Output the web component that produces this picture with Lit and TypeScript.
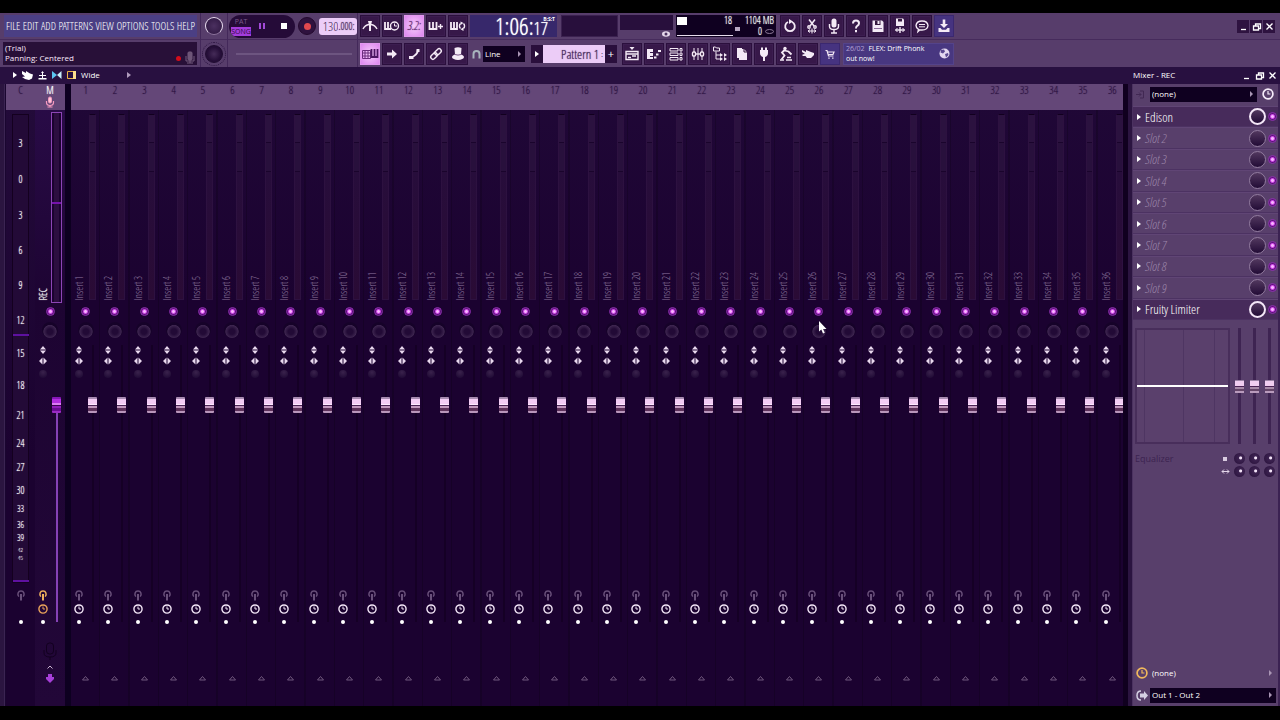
import { LitElement, html, svg, css, nothing } from "lit";
import { customElement, property } from "lit/decorators.js";
import { classMap } from "lit/directives/class-map.js";

const base = css`
  *, *::before, *::after, :host { box-sizing: border-box; }
  button, input, select {
    appearance: none; margin: 0; padding: 0; border: 0; background: none;
    color: inherit; font: inherit; outline: none; border-radius: 0; min-width: 0;
  }
  button { display: grid; place-items: center; }
  svg { display: block; overflow: visible; }
  .knob { border-radius: 50%; }
  .knob::-webkit-slider-thumb { appearance: none; opacity: 0; width: 1px; height: 1px; }
  .led {
    width: 9px; height: 9px; border-radius: 50%; border: 1px solid #8d2fae;
    background: radial-gradient(circle, #f7b2ff 0 1px, #cd45e6 2px, #5b1478 3px);
  }
`;

const clock = (color: string, size: number) => html`
  <svg width=${size} height=${size} viewBox="0 0 12 12" fill="none" stroke=${color}>
    <circle cx="6" cy="6" r="4.900" stroke-width="1.700"></circle><path d="M6 3v3h2.400" stroke-width="1.200"></path>
  </svg>`;

const link = (color: string) => html`
  <svg width="8" height="11" viewBox="0 0 8 11" fill="none" stroke=${color}>
    <path d="M1.800 6.600C0 4.400 1 1 4 1s4 3.400 2.200 5.600" stroke-width="1.500"></path>
    <path d="M4 4v6.500" stroke-width="2"></path>
  </svg>`;

@customElement("mixer-strip")
export class MixerStrip extends LitElement {
  @property() label = "";
  @property() name = "";
  @property({ type: Boolean, reflect: true }) master = false;

  static styles = [base, css`
    :host {
      display: flex; flex-direction: column; min-width: 0;
      font-family: "Open Sans Condensed Light", "Open Sans Condensed", "Roboto Condensed", sans-serif;
      background: linear-gradient(90deg, transparent 28px, #0000002e 28px), linear-gradient(#200837, #1b0230 35%, #1b0230);
    }
    :host([master]) { background: linear-gradient(#2a0c49, #1d0432 35%, #220738); }
    .head {
      height: 26px; background: #644778; color: #2c1240; font-size: 11px; line-height: 12px;
      display: flex; flex-direction: column; align-items: center; flex: none; text-shadow: 0 0 1px #3a1f50;
    }
    :host([master]) .head { color: #fff; text-shadow: 0 0 1px #fff; }
    .two { display: grid; grid-template-columns: 16px 11px; justify-items: center; }
    .top { height: 194px; padding-top: 4px; flex: none; }
    .name {
      writing-mode: vertical-rl; transform: rotate(180deg); align-self: end; color: #927aa0;
      font-size: 10px; line-height: 12px; padding-top: 4px; white-space: nowrap;
    }
    :host([master]) .name { color: #fff; text-shadow: 0 0 1px #fff; }
    .meter {
      width: 7px; height: 186px; border: 1px solid #2d1140; border-top-color: #12001f;
      background: linear-gradient(#2b123f 0 27px, #1a042c 27px 28px, #28103c 28px 56px, #1a042c 56px 57px, #270d3b 57px, #2a0b35);
    }
    :host([master]) .top { padding-top: 2px; }
    :host([master]) .meter {
      width: 11px; height: 191px; border: 1px solid #8c45b5;
      background: linear-gradient(transparent 89px, #7512ac 89px 91px, transparent 91px), linear-gradient(90deg, #1b0230 2px, #2c0e40 2px 7px, #1b0230 7px);
    }
    .mute { height: 14px; display: grid; place-items: center; flex: none; }
    .pan { height: 24px; display: grid; place-items: center; flex: none; }
    .pan .knob {
      width: 16px; height: 16px; background: radial-gradient(ellipse 7px 7px at 50% 60%, #220a36 40%, #3d254f 90%, #160229);
    }
    .mid { flex: 1; min-height: 0; grid-template-rows: minmax(0, 1fr); }
    .left { display: flex; flex-direction: column; align-items: center; padding-top: 2px; }
    .left > * { display: grid; place-items: center; flex: none; }
    .a { height: 12px; } .b { height: 10px; } .c { height: 16px; } .d { height: 14px; } .e { height: 12px; }
    .c .knob { width: 8px; height: 8px; background: radial-gradient(circle at 50% 30%, #3a224c, #1a0530); }
    .left .space { flex: 1; }
    .dot { width: 4px; height: 4px; border-radius: 50%; background: #fff; }
    .fader {
      writing-mode: vertical-lr; direction: rtl; width: 9px; height: auto; align-self: stretch;
      margin: 3px 0 6px; background: linear-gradient(90deg, transparent 4px, #150025 4px 6px, transparent 6px);
    }
    :host([master]) .fader { background: linear-gradient(90deg, transparent 4px, #8542b5 4px 6px, transparent 6px) bottom / 100% 210px no-repeat; }
    .fader::-webkit-slider-thumb {
      appearance: none; width: 9px; height: 16px; border-radius: 1px;
      background: linear-gradient(#a78ab0 0 2px, #f3ccf4 2px 7px, #ffe9ff 7px 8px, #4a2254 8px 9px, #c096bd 9px 11px, #5c3059 11px 14px, #b996bb 14px);
    }
    :host([master]) .fader::-webkit-slider-thumb {
      background: linear-gradient(#8417b5 0 2px, #b22de0 2px 6px, #dc7cf5 6px 8px, #3a0650 8px 9px, #8d1bb8 9px 11px, #6a0b93 11px 14px, #9a2bc4 14px);
    }
    .foot { height: 78px; flex: none; display: flex; flex-direction: column; align-items: center; padding-top: 45px; }
    :host([master]) .foot { padding-top: 14px; gap: 5px; }
  `];

  render() {
    return html`
      <div class="head"><span>${this.label}</span>
        ${this.master ? html`<svg width="10" height="12" viewBox="0 0 10 12" fill="none" stroke="#f79ac0"><rect x="3.500" y="1" width="3" height="6" rx="1.500" fill="#ffc6d8"></rect><path d="M1.500 5v1.500a3.500 3 0 0 0 7 0V5M5 9v2M2.500 11h5" stroke-width="1.200"></path></svg>` : nothing}
      </div>
      <div class="two top"><span class="name">${this.name}</span><span class="meter"></span></div>
      <div class="mute"><input class="led" type="checkbox" checked aria-label="${this.name} on"></div>
      <div class="pan"><input class="knob" type="range" aria-label="${this.name} panning"></div>
      <div class="two mid">
        <div class="left">
          <button class="a" aria-label="Invert phase"><svg width="6" height="8" viewBox="0 0 6 8" fill="#e9d8ee"><path d="M3 0L6 3.500H0zM3 8L6 4.500H0z"></path></svg></button>
          <button class="b" aria-label="Swap channels"><svg width="8" height="6" viewBox="0 0 8 6" fill="#e9d8ee"><path d="M0 3L3.500-.5v7zM8 3L4.500-.5v7z"></path></svg></button>
          <span class="c"><input class="knob" type="range" aria-label="${this.name} stereo"></span>
          <span class="space"></span>
          <button class="d" aria-label="Route">${link(this.master ? "#f0b25c" : "#69507a")}</button>
          <button class="d" aria-label="Latency">${clock(this.master ? "#e9a35a" : "#f3e6f7", 10)}</button>
          <span class="e"><span class="dot"></span></span>
        </div>
        <input class="fader" type="range" value="80" aria-label="${this.name} level">
      </div>
      <div class="foot">
        ${this.master
          ? html`<svg width="14" height="18" viewBox="0 0 14 18" fill="none" stroke="#12001f"><rect x="3.500" y="1" width="7" height="11" rx="3"></rect><path d="M1 8v3q0 4 6 4t6-4V8M7 15v3"></path></svg>
            <svg width="6" height="4" viewBox="0 0 6 4" fill="none" stroke="#c8b5d0"><path d="M.5 3.500L3 1l2.500 2.500"></path></svg>
            <svg width="8" height="9" viewBox="0 0 8 9" fill="#a63fd8"><path d="M2 0h4v3h2v2L4 9 0 5V3h2z"></path></svg>`
          : html`<svg width="7" height="10" viewBox="0 0 7 10" fill="none" stroke="#71597e"><path d="M.5 7L3.500 3.500 6.500 7z"></path></svg>`}
      </div>`;
  }
}

const K = "#f4eaf6";
const icons: Record<string, unknown> = {
  metro: svg`<path d="M3 13Q5 9 9 8.500M17 13Q15 9 11 8.500"/><path d="M8 5h4l-1 4v6H9V9z" fill=${K} stroke="none"/>`,
  wait: svg`<path d="M3 6v7h6M6 6v7" stroke-width="1.800"/><circle cx="12.500" cy="10" r="4"/><path d="M12.500 7.500V10H15" stroke-width="1"/>`,
  count: svg``,
  keysPlus: svg`<path d="M3.500 6v7h7V6M7 6v7" stroke-width="1.800"/><path d="M12 10.500h5M14.500 8v5"/>`,
  keysLoop: svg`<path d="M3 6v7h6V6M6 6v7" stroke-width="1.800"/><path d="M12.500 12.500a3.500 3.500 0 0 1 0-5M15.500 7.500a3.500 3.500 0 0 1 0 5"/><path d="M12.500 5.500l3 1.500-3 2zM15.500 15l-3-1.800 3-2z" fill=${K} stroke="none"/>`,
  typing: svg`<path d="M2.500 6.500h8v8h-8z" stroke="#6b2c7c" stroke-width="1"/><path d="M2 9h9M2 12h9M5 6v9M8 6v9" stroke="#6b2c7c" stroke-width="1"/><path d="M11.500 5v8h6V5M14.500 5v8" stroke="#4b1560" stroke-width="1.800"/>`,
  arrow: svg`<path d="M5 8.500h5V5.500l5 4.500-5 4.500v-3H5z" fill=${K} stroke="none"/>`,
  slide: svg`<path d="M13.800 6q0 5-7 7.500" stroke-width="1.800"/><path d="M5 12h4.500v3H5zM12.500 5h3v3h-3z" fill=${K} stroke="none"/>`,
  chain: svg`<rect x="-2.200" y="-3.700" width="4.400" height="7.400" rx="2.200" transform="translate(12 8) rotate(45)"/><rect x="-2.200" y="-3.700" width="4.400" height="7.400" rx="2.200" transform="translate(8 12) rotate(45)"/>`,
  hat: svg`<path d="M6.500 4q3.500-1.500 7 0L13 11q-3 1.200-6 0z" fill=${K} stroke="none"/><ellipse cx="10" cy="13" rx="6" ry="3" fill=${K} stroke="none"/><path d="M7 10.500q3 1.200 6 0" stroke="#7b5589" stroke-width="1"/>`,
  playlist: svg`<path d="M4 7.500h12v8H4zM4 10h12"/><path d="M7.500 3h5L10 6z" fill=${K} stroke="none"/><path d="M6 13.500h3M10 12h4"/>`,
  piano: svg`<path d="M3 5h6v3H6v1h3v3H6v1h3v2H3z" fill=${K} stroke="none"/><path d="M10 13.500h2.500M12 10.500h2.500M14 7h3" stroke-width="2"/>`,
  rack: svg`<path d="M4 4.500h8v2.500H4zM4 9h8v2.500H4zM4 13.500h8V16H4z" stroke-width="1"/><path d="M14 4.500h2v2.500h-2zM14 9h2v2.500h-2zM14 13.500h2V16h-2z" stroke-width="1"/>`,
  mixer: svg`<path d="M6 4v12M10 4v12M14 4v12" stroke-width="1"/><rect x="4.500" y="8" width="3" height="4" rx="1" fill="#35183f"/><rect x="12.500" y="8" width="3" height="4" rx="1" fill="#35183f"/><path d="M8 10h4"/>`,
  tree: svg`<path d="M3.500 3h2l1 1h3v3h-6zM6 7.500V15h4M6 11h4" stroke-width="1"/><path d="M10 9l3 2-3 2zM14 9l3 2-3 2zM10 13l3 2-3 2zM14 13l3 2-3 2z" fill=${K} stroke="none"/>`,
  copy: svg`<path d="M5 4h5v1h2l3 3v8H7v-2H5z" fill=${K} stroke="none"/><path d="M12 5v3h3" stroke="#35183f" stroke-width="1"/>`,
  plug: svg`<path d="M7 3.500h2V6h2V3.500h2V6h1v3q0 3-3 4v4H9v-4q-3-1-3-4V6h1z" fill=${K} stroke="none"/>`,
  tempo: svg`<circle cx="9" cy="4.500" r="1.700" fill=${K} stroke="none"/><path d="M8.500 6L6 8.500l2.500 3-3 4M8.500 6.500l4 1 3 3" stroke-width="1.800"/><path d="M4 16h4M10 16h6M11 13.500h4" stroke-width="1.500"/>`,
  hand: svg`<path d="M4 6l4 2V6l5 2 3 1v2l-3 3H9l-1.500-2H4.500v-1.500L7 10 4 8z" fill=${K} stroke="none"/>`,
  cart: svg`<path d="M5.500 6.500h1.500l1.500 5.500h5M7.500 8h6.500l-1 2.500H8.500" stroke-width="1.200"/><path d="M9 13.500v1.300M12.800 13.500v1.300"/>`,
  undo: svg`<path d="M8 6a4.800 4.800 0 1 0 4 0" stroke-width="1.800"/><path d="M9 3l4 2.500-4 2.500z" fill=${K} stroke="none"/>`,
  cut: svg`<path d="M7 3.500l5 6.500M13 3.500l-5 6.500" stroke-width="1.500"/><circle cx="7" cy="11" r="1.200"/><circle cx="13" cy="11" r="1.200"/><path d="M6 15h8M8 13.500L6 15l2 1.500M12 13.500l2 1.500-2 1.500M10 12.500v5" stroke-width="1"/>`,
  mic: svg`<rect x="7.500" y="2.500" width="5" height="9" rx="2.500" fill=${K} stroke="none"/><path d="M5.500 8v2.500q0 3 4.500 3t4.500-3V8M10 13.500V17M7 17h6"/>`,
  help: svg`<path d="M7 7.500q0-3 3-3t3 2.700q0 1.600-1.700 2.600Q10 10.700 10 12.500" stroke-width="2"/><path d="M9 14h2v2.200H9z" fill=${K} stroke="none"/>`,
  save: svg`<path d="M4.500 4.500H14L15.500 6v10h-11z" fill=${K} stroke="none"/><path d="M7 4.500h5.500V9H7zM11 5v3" fill="#35183f" stroke="none"/><path d="M9.500 5h2v3h-2z" fill=${K} stroke="none"/><path d="M6 12.500h8" stroke="#8b6a9a" stroke-width="1"/>`,
  saveNew: svg`<path d="M6 2.500h7l1 1V10H6z" fill=${K} stroke="none"/><path d="M8 3h4v2.500H8z" fill="#35183f" stroke="none"/><path d="M5.500 14h9M10 11v6"/><path d="M7.500 12l-2 2 2 2M12.500 12l2 2-2 2" stroke-width="1"/>`,
  chat: svg`<path d="M6 15.500l.5-2.200Q4 12 4 9.500 4.500 5 10 5t6 4.500Q15.500 14 10 14q-1.500 0-2-.2z"/><path d="M7 8.500h6M7 10.800h6" stroke-width="1"/>`,
  down: svg`<path d="M8.700 3.500h2.600V8H14l-4 4-4-4h2.700z" fill=${K} stroke="none"/><path d="M4.500 12v4h11v-4h-2L12 13.800H8L6.500 12z" fill=${K} stroke="none"/>`,
};

const row1a = [["metro", "Metronome"], ["wait", "Wait for input"], ["count", "Countdown"], ["keysPlus", "Blend notes"], ["keysLoop", "Loop recording"]];
const row2a = [["typing", "Typing keyboard"], ["arrow", "Step edit"], ["slide", "Slide"], ["chain", "Link"], ["hat", "Multilink"]];
const row1b = [["undo", "Undo"], ["cut", "Cut"], ["mic", "Record"], ["help", "Help"], ["save", "Save"], ["saveNew", "Save new"], ["chat", "Project info"], ["down", "Download"]];
const row2b = [["playlist", "Playlist"], ["piano", "Piano roll"], ["rack", "Channel rack"], ["mixer", "Mixer"], ["tree", "Browser"], ["copy", "Project picker"], ["plug", "Plugins"], ["tempo", "Tempo tapper"], ["hand", "Touch"], ["cart", "Shop"]];
const menus = ["FILE", "EDIT", "ADD", "PATTERNS", "VIEW", "OPTIONS", "TOOLS", "HELP"];

const marks: [string, number][] = [["3", 144], ["0", 180], ["3", 216], ["6", 251], ["9", 286], ["12", 321], ["15", 354], ["18", 386], ["21", 416], ["24", 444], ["27", 468], ["30", 491], ["33", 510], ["36", 526], ["39", 539], ["42", 551], ["45", 559]];
const slots = ["Edison", "Slot 2", "Slot 3", "Slot 4", "Slot 5", "Slot 6", "Slot 7", "Slot 8", "Slot 9", "Fruity Limiter"];

@customElement("app-root")
export class AppRoot extends LitElement {
  static styles = [base, css`
    :host {
      display: flex; flex-direction: column; min-height: 100vh; padding: 13px 0 14px; background: #000;
      color: #fff; font: 8px/10px "Open Sans", "Noto Sans", sans-serif; position: relative; overflow: hidden;
      --narrow: "Open Sans Condensed Light", "Open Sans Condensed", "Roboto Condensed", sans-serif;
    }
    .bar { display: flex; background: #573d6b; height: 54px; flex: none; }
    .group { display: grid; grid-template: 27px 27px / minmax(0, 1fr); border-right: 1px solid #43285a; flex: none; }
    .group > *, .wide > * { display: flex; align-items: center; }
    .group > :first-child, .wide > :first-child { border-bottom: 1px solid #462b5c; }
    .g1 { width: 201px; } .g2 { width: 27px; } .g3 { width: 130px; }
    .wide { flex: 1; min-width: 0; display: grid; grid-template: 27px 27px / minmax(0, 1fr); }
    .menu { padding: 2px 3px 2px 4px; }
    .menu nav {
      flex: 1; height: 22px; background: #4b3f84; display: flex; justify-content: space-between; align-items: center;
      padding: 0 2px; font: 11px/14px var(--narrow); color: #fff; text-shadow: 0 0 1px #fff;
    }
    .hint { padding: 0 3px; }
    .hint > div { flex: 1; height: 23px; background: #281038; padding: 1px 2px; display: flex; align-items: end; gap: 4px; }
    .hint p { margin: 0; flex: 1; color: #f8e8fb; align-self: start; }
    .hint i { width: 5px; height: 5px; background: #d30d1b; border-radius: 50%; margin-bottom: 3px; }
    .center { justify-content: center; }
    .vol { width: 18px; height: 18px; border: 1px solid #e9dcf0; border-bottom-color: #8c739c; background: radial-gradient(#4b3060, #2b143d); }
    .pitch { width: 18px; height: 18px; background: radial-gradient(#452b58, #250e38 60%); border: 1px solid #1f0b30; outline: 1px dotted #2f1744; outline-offset: 2px; }
    .transport { gap: 3px; padding-left: 1px; }
    .pill { display: flex; width: 66px; height: 23px; border-radius: 12px; background: #250b38; overflow: hidden; flex: none; }
    .mode { width: 22px; font-size: 7px; line-height: 9px; display: flex; flex-direction: column; justify-content: center; gap: 1px; padding-left: 2px; }
    .mode button { height: 9px; color: #7a5a8b; }
    .mode .on { background: #a43cdc; color: #2e0b46; }
    .pill > button { width: 22px; }
    .rec { width: 18px; height: 18px; border-radius: 50%; background: #2f123f; border: 1px solid #24092f; flex: none; }
    .rec i { width: 7px; height: 7px; border-radius: 50%; background: #e2484e; }
    .tempo { display: flex; width: 38px; height: 17px; background: #eccdf8; border-radius: 3px; color: #3c1f50; font: 13px/17px var(--narrow); align-items: center; justify-content: center; text-shadow: 0 0 1px #573a68; }
    .tempo input { width: 17px; text-align: right; } .tempo small { font-size: 10px; }
    .line-range { width: 116px; height: 8px; margin-left: 8px; background: linear-gradient(transparent 3px, #6d5580 3px 5px, transparent 5px); }
    .line-range::-webkit-slider-thumb { appearance: none; opacity: 0; width: 1px; }
    .set { display: flex; gap: 2px; flex: none; }
    .tool { width: 20px; height: 22px; background: #371849; border: 1px solid #2b0f3d; box-shadow: 0 0 0 1px #3c1d50 inset; }
    .tool.hot { background: radial-gradient(#f6cdfb, #dd86ef); border-color: #e298ef; box-shadow: none; color: #5b2868; font: italic 12px/12px var(--narrow); text-shadow: 0 0 1px #7b3b88; }
    .tool.blue { background: #463380; border-color: #3b2870; box-shadow: none; }
    .wide > * { padding-left: 2px; }
    .time { width: 87px; height: 22px; background: #37286b; margin-left: 2px; display: flex; align-items: center; justify-content: flex-end; padding-right: 9px; font: 24px/22px var(--narrow); text-shadow: 0 0 1px #fff; flex: none; position: relative; }
    .time small { font-size: 18px; align-self: end; line-height: 18px; }
    .time em { position: absolute; right: 2px; top: 1px; font: normal bold 5px/6px "Open Sans", sans-serif; text-shadow: none; }
    .scope { width: 57px; height: 22px; background: #280f3c; border: 1px solid #3b2150; margin-left: 4px; flex: none; }
    .peak { width: 53px; height: 26px; margin-left: 2px; display: flex; flex-direction: column; align-items: flex-end; flex: none; padding: 2px 2px 0 0; }
    .peak i { align-self: stretch; height: 15px; background: #280f3c; margin-right: -2px; }
    .cpu { width: 100px; height: 22px; background: #0f0020; margin: 0 4px 0 3px; display: grid; grid-template-columns: 34px 1fr 1fr; font: 10px/11px var(--narrow); text-shadow: 0 0 1px #fff; text-align: right; padding-right: 2px; flex: none;
      background-image: linear-gradient(#fff, #fff), linear-gradient(#e7dced, #e7dced), linear-gradient(#b8a9c4, #b8a9c4); background-size: 10px 8px, 56px 1px, 5px 4px; background-position: 1px 2px, 1px 20px, 59px 12px; background-repeat: no-repeat; }
    .cpu span:nth-child(1) { grid-column: 2; padding-right: 10px; }
    .cpu span:nth-child(2) { grid-column: 3; white-space: nowrap; }
    .cpu span:nth-child(3) { grid-column: 3; display: flex; justify-content: flex-end; align-items: center; gap: 3px; }
    .win { display: flex; gap: 1px; margin-left: auto; padding-right: 5px; }
    .win button { width: 12px; height: 13px; background: #2e1340; }
    .magnet { margin: 0 2px 0 4px; flex: none; }
    select { background: #0f0020 url("data:image/svg+xml,%3Csvg xmlns='http://www.w3.org/2000/svg' width='4' height='6'%3E%3Cpath d='M0 0l3 3-3 3z' fill='%23a995b4'/%3E%3C/svg%3E") right 3px center no-repeat; color: #fff; height: 15px; }
    .snap { width: 42px; height: 16px; padding-left: 2px; flex: none; }
    .pattern { display: flex; margin: 0 5px 0 6px; height: 18px; flex: none; }
    .pattern button { width: 12px; background: #2a0f3c; font-size: 11px; }
    .pattern label { width: 62px; background: #ecccf7; color: #3c1f50; display: flex; align-items: center; justify-content: flex-end; padding-right: 2px; }
    .pattern input { width: 54px; text-align: right; font: 13px/16px var(--narrow); text-shadow: 0 0 1px #5b3d6e; padding-right: 2px; }
    .news { width: 111px; height: 22px; margin-left: 3px; background: #483780; border: 1px solid #54438a; display: flex; align-items: center; justify-content: space-between; padding: 0 3px 0 2px; font-size: 7px; flex: none; text-decoration: none; color: #fff; white-space: nowrap; }
    .news span span { color: #b4a1d4; margin-right: 2px; }
    .title { height: 17px; background: #281040; display: flex; align-items: center; flex: none; padding-bottom: 1px; }
    .title .l { display: flex; gap: 5px; align-items: center; padding-left: 13px; flex: 1; }
    .title .l button:last-child { margin-left: 22px; }
    .title .r { width: 147px; display: flex; align-items: center; gap: 3px; padding-right: 3px; }
    .title .r span { flex: 1; } .title .r button { width: 10px; height: 12px; }
    .body { flex: 1; display: flex; min-height: 0; }
    .edge { width: 6px; background: linear-gradient(90deg, #2b1540 4px, #3b2452 4px 5px, #1a0630 5px); flex: none; }
    .cur { width: 29px; flex: none; display: flex; flex-direction: column; align-items: center; background: linear-gradient(#230b3a, #1b0230 60%); font: 10px/8px var(--narrow); }
    .cur .head { align-self: stretch; height: 26px; background: #644778; color: #2c1240; font-size: 11px; line-height: 12px; text-align: center; text-shadow: 0 0 1px #3a1f50; }
    .scale { width: 17px; flex: 1; margin: 4px 0 0; background: #230a37; border: 1px solid #14001f; position: relative; }
    .scale div { display: flex; align-items: flex-end; justify-content: center; color: #fff; text-shadow: 0 0 1px #e6d3ec; }
    .scale div:nth-of-type(n + 13) { font-size: 9px; } .scale div:nth-of-type(n + 16) { font-size: 6px; }
    .mark { position: absolute; left: 0; right: -1px; height: 2px; background: #5e11a0; }
    .mark.hi { top: 219px; } .mark.lo { bottom: 0; }
    .after { height: 123px; display: flex; flex-direction: column; align-items: center; padding-top: 7px; }
    .dot { width: 4px; height: 4px; border-radius: 50%; background: #fff; margin-top: 19px; }
    mixer-strip[master] { width: 30px; flex: none; }
    .gap { width: 6px; background: #0d0020; flex: none; }
    .tracks { flex: 1; min-width: 0; overflow: hidden; display: flex; }
    .lanes { flex: 1; min-width: 0; margin-right: -4px; display: grid; grid-template-columns: repeat(36, minmax(0, 1fr)); }
    .rail { width: 10px; background: linear-gradient(90deg, #10001f 5px, #2b1440 5px 9px, #4b3260 9px); flex: none; }
    .side { width: 147px; background: #583f6b; border-right: 2px solid #3b2252; display: flex; flex-direction: column; flex: none; min-width: 0; }
    .route { display: flex; align-items: center; height: 20px; gap: 5px; padding: 0 4px 0 3px; flex: none; }
    .route select { flex: 1; padding-left: 2px; }
    .route svg { flex: none; }
    .out { height: 22px; gap: 2px; padding-right: 2px; }
    .slots { height: 214px; display: grid; grid-template-rows: repeat(10, 1fr); margin-top: 2px; flex: none; }
    .slot { display: flex; align-items: center; padding: 0 1px 0 4px; border-bottom: 1px solid #4c3262; border-top: 1px solid #604575; font: italic 13px/14px var(--narrow); color: #9d86aa; }
    .slot .lbl { flex: 1; padding-left: 4px; justify-content: start; }
    .slot.full { background: #472b5b; color: #fff; font-style: normal; text-shadow: 0 0 1px #fff; }
    .slot .knob { width: 17px; height: 17px; border: 1px solid #917b9e; background: linear-gradient(#52385f, #27103a 90%); margin-right: 2px; }
    .slot.full .knob { border: 2px solid #f3e6f7; }
    .eq { display: flex; padding: 8px 3px 0 2px; height: 133px; gap: 3px; flex: none; }
    .graph { flex: 1; height: 116px; border: 2px solid #482e5b; background: linear-gradient(transparent 55px, #fff 55px 57px, transparent 57px), linear-gradient(90deg, transparent 7px, #4e3562 7px 8px, transparent 8px 46px, #4e3562 46px 47px, transparent 47px 77px, #4e3562 77px 78px, transparent 78px), #5a406c; }
    .bands { display: flex; gap: 3px; }
    .bands input { writing-mode: vertical-lr; width: 12px; height: 116px; background: linear-gradient(90deg, transparent 5px, #3e2452 5px 8px, transparent 8px); }
    .bands input::-webkit-slider-thumb { appearance: none; width: 9px; height: 13px; background: linear-gradient(#9c83a6 0 1px, #f0cdf0 1px 6px, #4a2254 6px 7px, #a688a7 7px 9px, #644468 9px 11px, #b99bbd 11px); }
    .tune { display: grid; grid-template-columns: 1fr 10px 12px 12px 12px; gap: 2px 3px; align-items: center; justify-items: center; padding: 0 3px 0 2px; color: #3c2350; flex: none; }
    .tune label { justify-self: start; font-size: 9px; }
    .tune .knob { width: 11px; height: 11px; background: radial-gradient(circle at 60% 45%, #f3e4f8 0 1px, #3c2250 2px, #27103a); }
    .push { flex: 1; }
    .out select.clear { background-color: transparent; }
    .cursor { position: absolute; left: 819px; top: 321px; pointer-events: none; }
  `];

  private tools(list: string[][]) {
    return list.map(([id, label]) => html`
      <button class=${classMap({ tool: true, hot: id === "count" || id === "typing", blue: id === "cart" || id === "down" })} aria-label=${label}>
        ${id === "count" ? "3.2:" : html`<svg width="18" height="20" viewBox="1 0 18 20" fill="none" stroke=${K} stroke-width="1.400">${icons[id]}</svg>`}
      </button>`);
  }

  private windowButtons() {
    return ["M3 8.500h5", "M2.500 5h5v4h-5zM4.500 5V3h5v4.500h-2", "M2.500 2.500l6 6M8.500 2.500l-6 6"].map((d, i) => html`
      <button aria-label=${["Minimize", "Restore", "Close"][i]}><svg width="11" height="11" viewBox="0 0 11 11" fill="none" stroke="#fff" stroke-width="1.300"><path d=${d}></path></svg></button>`);
  }

  private tri(c = "#fff") {
    return html`<svg width="4" height="6" viewBox="0 0 4 6" fill=${c}><path d="M0 0l4 3-4 3z"></path></svg>`;
  }

  render() {
    let prev = 112;
    return html`
      <header class="bar">
        <div class="group g1">
          <div class="menu"><nav>${menus.map((m) => html`<button>${m}</button>`)}</nav></div>
          <div class="hint"><div>
            <p>(Trial)<br>Panning: Centered</p><i></i>
            <svg width="10" height="13" viewBox="0 0 10 13" fill="none" stroke="#725b7c"><rect x="3" y="1" width="4" height="8" rx="1" fill="#6a5374"></rect><path d="M1 5v5h8V5M2 12h6M5 3v9"></path></svg>
          </div></div>
        </div>
        <div class="group g2">
          <div class="center"><input class="knob vol" type="range" aria-label="Main volume"></div>
          <div class="center"><input class="knob pitch" type="range" aria-label="Main pitch"></div>
        </div>
        <div class="group g3">
          <div class="transport">
            <div class="pill">
              <div class="mode"><button>PAT</button><button class="on">SONG</button></div>
              <button aria-label="Pause"><svg width="6" height="6" fill="#a24ad8"><path d="M0 0h2v6H0zM4 0h2v6H4z"></path></svg></button>
              <button aria-label="Stop"><svg width="6" height="6" fill="#fff"><path d="M0 0h6v6H0z"></path></svg></button>
            </div>
            <button class="rec" aria-label="Record"><i></i></button>
            <label class="tempo"><input value="130" aria-label="Tempo"><small>.000:</small></label>
          </div>
          <div><input class="line-range" type="range" aria-label="Song position"></div>
        </div>
        <div class="wide">
          <div>
            <div class="set">${this.tools(row1a)}</div>
            <div class="time">1:06:<small>17</small><em>B:S:T</em></div>
            <div class="scope"></div>
            <div class="peak"><i></i><svg width="10" height="7" viewBox="0 0 10 7"><ellipse cx="5" cy="4" rx="4" ry="2.800" fill="#e6d8ec"></ellipse><circle cx="5" cy="4" r="1.500" fill="#4b3160"></circle></svg></div>
            <div class="cpu"><span>18</span><span>1104 MB</span><span>0 <svg width="9" height="5" viewBox="0 0 9 5" fill="none" stroke="#8d7a98"><ellipse cx="4.500" cy="2.500" rx="4" ry="2"></ellipse></svg></span></div>
            <div class="set">${this.tools(row1b)}</div>
            <div class="win">${this.windowButtons()}</div>
          </div>
          <div>
            <div class="set">${this.tools(row2a)}</div>
            <svg class="magnet" width="9" height="10" viewBox="0 0 9 10" fill="none" stroke="#a8b4bd" stroke-width="2"><path d="M1.500 9.500V5a3 3 0 0 1 6 0v4.500"></path></svg>
            <select class="snap" aria-label="Snap"><option>Line</option></select>
            <div class="pattern"><button aria-label="Pattern menu">${this.tri()}</button><label><input value="Pattern 1" aria-label="Pattern">:</label><button aria-label="Add pattern">+</button></div>
            <div class="set">${this.tools(row2b)}</div>
            <a class="news" href="#news"><span><span>26/02</span> FLEX: Drift Phonk<br>out now!</span>
              <svg width="11" height="11" viewBox="0 0 11 11"><circle cx="5.500" cy="5.500" r="5" fill="#e3d8f0"></circle><path d="M2 2l3-.5 1 2-2 2-2.500-1zM6 6l3-1 .5 2L7 9.500z" fill="#5a4890"></path></svg></a>
          </div>
        </div>
      </header>
      <div class="title">
        <div class="l">
          <button aria-label="Menu">${this.tri()}</button>
          <button aria-label="Touch"><svg width="11" height="9" viewBox="0 0 11 9" fill="#fff"><path d="M0 0l4 2V0l4 2.500 3 1-1 4-3 1.500-4-1-3-2 3-.5L0 3z"></path></svg></button>
          <button aria-label="Dock"><svg width="9" height="9" viewBox="0 0 9 9" fill="#fff"><path d="M4.500 0L6 2H5v2h3v1H5v2h3.500v1.500h-8V7H4V5H1V4h3V2H3z"></path></svg></button>
          <button aria-label="View"><svg width="10" height="8" viewBox="0 0 10 8"><path d="M0 0l5 4-5 4z" fill="#5cc6f1"></path><path d="M9.500 0L5 4l4.500 4z" fill="#c8edfb"></path></svg></button>
          <button aria-label="Layout"><svg width="9" height="8" viewBox="0 0 9 8" fill="none" stroke="#edb345"><path d="M.5.5h8v7h-8z"></path><path d="M6 0h3v8H6z" fill="#ffe08d" stroke="none"></path></svg></button>
          <button>Wide</button>
          <button aria-label="More">${this.tri("#b09bbd")}</button>
        </div>
        <div class="r"><span>Mixer - REC</span>${this.windowButtons()}</div>
      </div>
      <main class="body">
        <div class="edge"></div>
        <div class="cur">
          <div class="head">C</div>
          <div class="scale">
            ${marks.map(([t, y]) => { const h = y - prev; prev = y; return html`<div style="height:${h}px">${t}</div>`; })}
            <span class="mark hi"></span><span class="mark lo"></span>
          </div>
          <div class="after">${link("#69507a")}<span class="dot"></span></div>
        </div>
        <mixer-strip master label="M" name="REC"></mixer-strip>
        <div class="gap"></div>
        <div class="tracks"><div class="lanes">
          ${Array.from({ length: 36 }, (_, i) => html`<mixer-strip label=${i + 1} name="Insert ${i + 1}"></mixer-strip>`)}
        </div></div>
        <div class="rail"></div>
        <aside class="side">
          <div class="route">
            <svg width="9" height="9" viewBox="0 0 9 9" fill="none" stroke="#412853"><path d="M4 1h3.500v7H4M0 4.500h5M3 2.500l2 2-2 2"></path></svg>
            <select aria-label="Input"><option>(none)</option></select>${clock("#f6ecfa", 12)}
          </div>
          <div class="slots">${slots.map((s, i) => html`
            <div class=${classMap({ slot: true, full: i === 0 || i === 9 })}>
              ${this.tri()}<button class="lbl">${s}</button>
              <input class="knob" type="range" aria-label="${s} mix"><input class="led" type="checkbox" checked aria-label="${s} on">
            </div>`)}</div>
          <div class="eq"><div class="graph"></div><div class="bands">${["Low", "Mid", "High"].map((b) => html`<input type="range" aria-label="${b} band">`)}</div></div>
          <div class="tune">
            <label for="eq0">Equalizer</label><svg width="4" height="4" fill="#d9cbe0"><path d="M0 0h4v4H0z"></path></svg>
            ${[0, 1, 2].map((i) => html`<input id="eq${i}" class="knob" type="range" aria-label="Frequency ${i + 1}">`)}
            <span></span><svg width="7" height="5" viewBox="0 0 7 5" fill="none" stroke="#e4d6ea"><path d="M0 2.500h7M2 .5l-2 2 2 2M5 .5l2 2-2 2"></path></svg>
            ${[0, 1, 2].map((i) => html`<input class="knob" type="range" aria-label="Width ${i + 1}">`)}
          </div>
          <div class="push"></div>
          <div class="route out">${clock("#f0b85c", 12)}<select class="clear" aria-label="Delay"><option>(none)</option></select></div>
          <div class="route out">
            <svg width="12" height="11" viewBox="0 0 12 11" fill="none" stroke="#d4cfe2" stroke-width="1.500"><path d="M5 1Q1 1 1 5.500T5 10"></path><path d="M4 3.500h4V1l4 4.500L8 10V7.500H4z" fill="#d4cfe2" stroke="none"></path></svg>
            <select aria-label="Output"><option>Out 1 - Out 2</option></select>
          </div>
        </aside>
      </main>
      <svg class="cursor" width="8" height="13" viewBox="0 0 8 13" fill="#fff"><path d="M0 0v10.500l2.300-2 1.700 4 1.800-.8-1.700-3.800H7.500z"></path></svg>`;
  }
}
